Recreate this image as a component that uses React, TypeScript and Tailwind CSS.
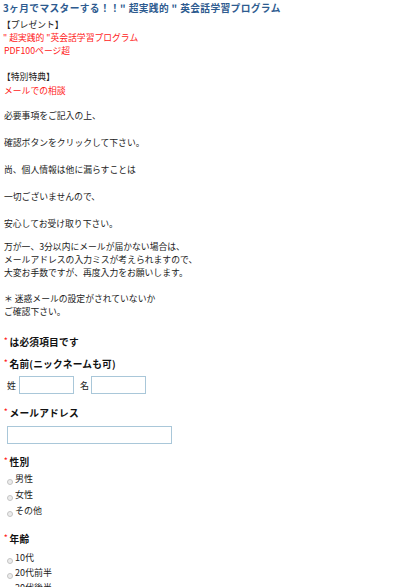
const lines = [
  "必要事項をご記入の上、",
  "確認ボタンをクリックして下さい。",
  "尚、個人情報は他に漏らすことは",
  "一切ございませんので、",
  "安心してお受け取り下さい。",
];

function Label({ text, className = "" }: { text: string; className?: string }) {
  return (
    <div className={`flex h-[13px] items-center leading-[13px] ${className}`}>
      <span className="mr-[2px] -translate-y-[2px] text-[7px] font-bold text-[#ff1a1a]">*</span>
      <span className="text-[9.7px] font-bold tracking-[0.2px] text-[#111]">{text}</span>
    </div>
  );
}

function Radio({ label }: { label: string }) {
  return (
    <label className="flex items-center">
      <span className="mr-[2px] ml-[3px] h-[6px] w-[6px] translate-y-[3px] rounded-full border border-[#c4c4c4] bg-[#ececec]" />
      <span className="text-[9px] text-[#222]">{label}</span>
    </label>
  );
}

export default function App() {
  return (
    <div className="min-h-[587px] bg-white pt-[2px] pl-[4px] font-['Noto_Sans_CJK_JP','Liberation_Sans',sans-serif] text-[8.8px] leading-[13px] text-[#222]">
      <h1 className="-ml-[1px] h-[13px] text-[9.7px] font-bold leading-[13px] tracking-[0.4px] text-[#2e5b8f]">
        3ヶ月でマスターする！！" 超実践的 " 英会話学習プログラム
      </h1>

      <div className="mt-[3px]">
        <div className="-ml-[2px]">【プレゼント】</div>
        <div className="-ml-[1px] text-[#ff1a1a]">" 超実践的 "英会話学習プログラム</div>
        <div className="text-[#ff1a1a]">PDF100ページ超</div>
      </div>

      <div className="mt-[13px]">
        <div className="-ml-[2px]">【特別特典】</div>
        <div className="mt-[1px] text-[#ff1a1a]">メールでの相談</div>
      </div>

      <div className="mt-[12px] flex flex-col gap-[14px]">
        {lines.map((l) => (
          <div key={l}>{l}</div>
        ))}
      </div>

      <div className="mt-[10px]">
        <div>万が一、3分以内にメールが届かない場合は、</div>
        <div>メールアドレスの入力ミスが考えられますので、</div>
        <div>大変お手数ですが、再度入力をお願いします。</div>
      </div>

      <div className="mt-[13px]">
        <div>＊ 迷惑メールの設定がされていないか</div>
        <div>ご確認下さい。</div>
      </div>

      <form>
        <Label text="は必須項目です" className="mt-[18px]" />

        <Label text="名前(ニックネームも可)" className="mt-[9px]" />
        <div className="mt-[5px] flex h-[18px] items-center">
          <span className="ml-[3px] w-[12px] text-[9px]">姓</span>
          <input className="h-[18px] w-[55px] border border-[#a9c7d9] outline-none" />
          <span className="ml-[6px] w-[11px] text-[9px]">名</span>
          <input className="h-[18px] w-[55px] border border-[#a9c7d9] outline-none" />
        </div>

        <Label text="メールアドレス" className="mt-[13px]" />
        <input className="mt-[6px] ml-[3px] block h-[18px] w-[165px] border border-[#a9c7d9] outline-none" />

        <Label text="性別" className="mt-[12px]" />
        <div className="mt-[2px] flex flex-col leading-[16px]">
          <Radio label="男性" />
          <Radio label="女性" />
          <Radio label="その他" />
        </div>

        <Label text="年齢" className="mt-[14px]" />
        <div className="mt-[4px] flex flex-col leading-[15px]">
          <Radio label="10代" />
          <Radio label="20代前半" />
          <Radio label="20代後半" />
        </div>
      </form>
    </div>
  );
}
